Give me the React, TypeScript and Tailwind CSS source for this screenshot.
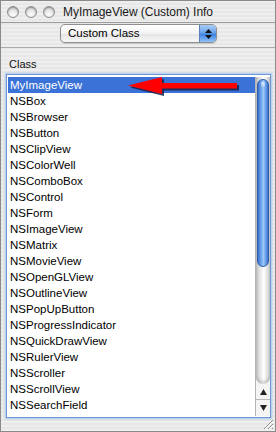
import React from "react";

const items = [
  "MyImageView",
  "NSBox",
  "NSBrowser",
  "NSButton",
  "NSClipView",
  "NSColorWell",
  "NSComboBox",
  "NSControl",
  "NSForm",
  "NSImageView",
  "NSMatrix",
  "NSMovieView",
  "NSOpenGLView",
  "NSOutlineView",
  "NSPopUpButton",
  "NSProgressIndicator",
  "NSQuickDrawView",
  "NSRulerView",
  "NSScroller",
  "NSScrollView",
  "NSSearchField",
];

const TOTAL_ITEMS = 34;
const TRACK_H = 304;
const thumbH = Math.round((TRACK_H * items.length) / TOTAL_ITEMS);

function Light() {
  return (
    <div className="w-[12px] h-[12px] rounded-full border border-[#8c8c8c] bg-[radial-gradient(circle_at_50%_75%,#ffffff_0%,#e6e6e6_45%,#b8b8b8_100%)] shadow-[inset_0_1px_1px_rgba(0,0,0,0.25)]" />
  );
}

export default function App() {
  return (
    <div
      className="w-[276px] h-[432px] relative overflow-hidden border border-[#8a8a8a] flex flex-col bg-[repeating-linear-gradient(180deg,#eeeeee_0px,#eeeeee_2px,#e7e7e7_2px,#e7e7e7_4px)] text-black"
      style={{ fontFamily: '"Liberation Sans", Arial, sans-serif' }}
    >
      {/* Title bar */}
      <div className="h-[22px] shrink-0 flex items-center border-b border-[#9c9c9c] pl-[6px]">
        <div className="flex items-center gap-[6px]">
          <Light />
          <Light />
          <Light />
        </div>
        <span className="ml-[8px] text-[12px] leading-[14px] tracking-[-0.05px] text-[#1a1a1a]">
          MyImageView (Custom) Info
        </span>
      </div>

      {/* Popup row */}
      <div className="h-[25px] shrink-0 border-b border-[#a9a9a9] pt-[1px] pl-[59px]">
        <div className="w-[157px] h-[19px] flex rounded-[5px] border border-[#8f8f8f] bg-[linear-gradient(180deg,#ffffff_0%,#f3f3f3_50%,#e4e4e4_51%,#f7f7f7_100%)] shadow-[0_1px_1px_rgba(0,0,0,0.15)] overflow-hidden">
          <div className="flex-1 pl-[7px] text-[11.5px] leading-[17px]">Custom Class</div>
          <div className="w-[17px] h-full border-l border-[#5a7fb8] bg-[linear-gradient(180deg,#a9cdf6_0%,#6aa3ea_45%,#3f82e0_55%,#8fc2f7_100%)] flex flex-col items-center justify-center gap-[2px]">
            <svg width="7" height="4" viewBox="0 0 7 4">
              <path d="M3.5 0 L7 4 L0 4 Z" fill="#111" />
            </svg>
            <svg width="7" height="4" viewBox="0 0 7 4">
              <path d="M0 0 L7 0 L3.5 4 Z" fill="#111" />
            </svg>
          </div>
        </div>
      </div>

      {/* Label */}
      <div className="pl-[8px] pt-[9px] h-[26px] shrink-0 text-[11px] leading-[14px] text-[#111]">Class</div>

      {/* List */}
      <div className="ml-[5px] w-[265px] h-[344px] shrink-0 border border-[#6f98d3] shadow-[0_0_0_1px_#bcd2ef,0_0_2px_1px_#a9c6ec] bg-white flex pt-[2px] pl-[1px] pb-[1px] relative">
        <div className="flex-1 flex flex-col">
          {items.map((name, i) => (
            <div
              key={name}
              className={
                i === 0
                  ? "h-[16px] pl-[2px] text-[11.5px] leading-[16px] bg-[#3b72d7] text-white"
                  : "h-[16px] pl-[2px] text-[11.5px] leading-[16px] text-black"
              }
            >
              {name}
            </div>
          ))}
        </div>

        {/* Scrollbar */}
        <div className="w-[15px] flex flex-col border-l border-[#b5b5b5] bg-[#f4f4f4]">
          <div className="flex-1 flex flex-col px-[1px] pt-[2px] rounded-b-[7px] bg-[linear-gradient(90deg,#c4c4c4,#ececec_35%,#ffffff_55%,#cccccc)] shadow-[inset_0_-3px_3px_rgba(0,0,0,0.15)]">
            <div
              className="relative shrink-0 rounded-[7px] border border-[#2f5fae] bg-[linear-gradient(90deg,#3a6fca,#6da3ec_30%,#9cc7f6_55%,#6ea4ea_75%,#3a70cc)]"
              style={{ height: thumbH }}
            >
              <div className="absolute left-[3px] right-[3px] top-[2px] h-[6px] rounded-full bg-[linear-gradient(180deg,rgba(255,255,255,0.8),rgba(255,255,255,0))]" />
            </div>
          </div>
          <div className="h-[16px] shrink-0 flex items-center justify-center border-b border-[#b9b9b9]">
            <svg width="7" height="6" viewBox="0 0 7 6">
              <path d="M3.5 0 L7 6 L0 6 Z" fill="#222" />
            </svg>
          </div>
          <div className="h-[16px] shrink-0 flex items-center justify-center">
            <svg width="7" height="6" viewBox="0 0 7 6">
              <path d="M0 0 L7 0 L3.5 6 Z" fill="#222" />
            </svg>
          </div>
        </div>

        {/* Red arrow annotation */}
        <svg
          className="absolute left-[117px] top-[0px]"
          width="122"
          height="24"
          viewBox="0 0 122 24"
        >
          <g transform="translate(2,2)" fill="#14224a" opacity="0.85">
            <path d="M4 10.5 L38 2 L38 8 L113 8 L113 13.5 L38 13.5 L38 19 Z" />
          </g>
          <path d="M4 10.5 L38 2 L38 8 L113 8 L113 13.5 L38 13.5 L38 19 Z" fill="#ff0000" />
        </svg>
      </div>

      {/* Resize grip */}
      <svg className="absolute right-[1px] bottom-[1px]" width="13" height="13" viewBox="0 0 13 13">
        <path d="M12 3 L3 12 M12 7 L7 12 M12 11 L11 12" stroke="#8a8a8a" strokeWidth="1" />
        <path d="M12 4 L4 12 M12 8 L8 12" stroke="#ffffff" strokeWidth="1" />
      </svg>
    </div>
  );
}
